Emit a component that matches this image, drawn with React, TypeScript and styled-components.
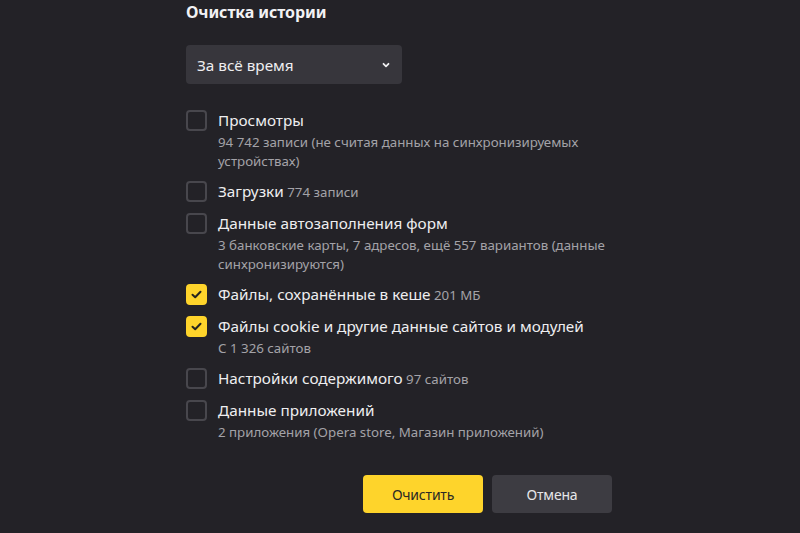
import React, { useState } from 'react';
import styled, { createGlobalStyle } from 'styled-components';

const GlobalStyle = createGlobalStyle`
  html, body {
    margin: 0;
    padding: 0;
    background: #232227;
  }
  body {
    font-family: "Noto Sans", "Open Sans", "Liberation Sans", sans-serif;
    color: #ececee;
  }
`;

const Page = styled.div`
  min-height: 533px;
  background: #232227;
  overflow: hidden;
`;

const Panel = styled.section`
  width: 426px;
  margin-left: 186px;
  padding-top: 2px;
  display: flex;
  flex-direction: column;
`;

const Title = styled.h2`
  margin: 0;
  font-size: 16px;
  line-height: 20px;
  font-weight: 700;
  color: #f2f2f4;
  letter-spacing: -0.1px;
`;

const Select = styled.button`
  margin-top: 23px;
  width: 216px;
  height: 39px;
  padding: 0 11px;
  border: none;
  border-radius: 4px;
  background: #37363c;
  color: #eeeef0;
  font-family: inherit;
  font-size: 15.3px;
  display: flex;
  align-items: center;
  justify-content: space-between;
  cursor: pointer;
`;

const List = styled.div`
  margin-top: 26px;
  display: flex;
  flex-direction: column;
  gap: 10px;
`;

const Row = styled.label`
  display: grid;
  grid-template-columns: 21px 1fr;
  column-gap: 11px;
  align-items: start;
  cursor: pointer;
`;

const Box = styled.span<{ $checked: boolean }>`
  width: 21px;
  height: 21px;
  box-sizing: border-box;
  border-radius: 4px;
  border: 2px solid ${p => (p.$checked ? '#fed42b' : '#48474d')};
  background: ${p => (p.$checked ? '#fed42b' : 'transparent')};
  display: flex;
  align-items: center;
  justify-content: center;
`;

const Texts = styled.div`
  display: flex;
  flex-direction: column;
`;

const Label = styled.div`
  font-size: 15.3px;
  line-height: 21px;
  color: #eeeef0;
`;

const Count = styled.span`
  font-size: 13.3px;
  color: #a3a2a8;
`;

const Sub = styled.div`
  margin-top: 2px;
  font-size: 13.3px;
  line-height: 19px;
  color: #a3a2a8;
`;

const Actions = styled.div`
  margin-top: 33px;
  display: flex;
  justify-content: flex-end;
  gap: 9px;
`;

const Button = styled.button<{ $primary?: boolean }>`
  width: 120px;
  height: 38px;
  border: none;
  border-radius: 4px;
  font-family: inherit;
  font-size: 14px;
  letter-spacing: -0.2px;
  background: ${p => (p.$primary ? '#fed42b' : '#3d3c42')};
  color: ${p => (p.$primary ? '#2a2925' : '#e6e6e8')};
  cursor: pointer;
`;

const Chevron = () => (
  <svg width="10" height="10" viewBox="0 0 10 10">
    <path d="M2.5 3.8 L5 6.3 L7.5 3.8" fill="none" stroke="#eeeef0" strokeWidth="1.8" strokeLinecap="round" strokeLinejoin="round" />
  </svg>
);

const Check = () => (
  <svg width="13" height="13" viewBox="0 0 13 13">
    <path d="M2.5 6.8 L5.2 9.3 L10.5 3.8" fill="none" stroke="#26251f" strokeWidth="2" strokeLinecap="round" strokeLinejoin="round" />
  </svg>
);

type Item = { label: string; count?: string; sub?: string; checked: boolean };

const items: Item[] = [
  { label: 'Просмотры', sub: '94 742 записи (не считая данных на синхронизируемых устройствах)', checked: false },
  { label: 'Загрузки', count: '774 записи', checked: false },
  { label: 'Данные автозаполнения форм', sub: '3 банковские карты, 7 адресов, ещё 557 вариантов (данные синхронизируются)', checked: false },
  { label: 'Файлы, сохранённые в кеше', count: '201 МБ', checked: true },
  { label: 'Файлы cookie и другие данные сайтов и модулей', sub: 'С 1 326 сайтов', checked: true },
  { label: 'Настройки содержимого', count: '97 сайтов', checked: false },
  { label: 'Данные приложений', sub: '2 приложения (Opera store, Магазин приложений)', checked: false },
];

export default function App() {
  const [state, setState] = useState(items.map(i => i.checked));
  const toggle = (idx: number) => setState(s => s.map((v, i) => (i === idx ? !v : v)));

  return (
    <Page>
      <GlobalStyle />
      <Panel>
        <Title>Очистка истории</Title>
        <Select>
          <span>За всё время</span>
          <Chevron />
        </Select>
        <List>
          {items.map((item, i) => (
            <Row key={item.label} onClick={() => toggle(i)}>
              <Box $checked={state[i]}>{state[i] && <Check />}</Box>
              <Texts>
                <Label>
                  {item.label}
                  {item.count && <Count> {item.count}</Count>}
                </Label>
                {item.sub && <Sub>{item.sub}</Sub>}
              </Texts>
            </Row>
          ))}
        </List>
        <Actions>
          <Button $primary>Очистить</Button>
          <Button>Отмена</Button>
        </Actions>
      </Panel>
    </Page>
  );
}
